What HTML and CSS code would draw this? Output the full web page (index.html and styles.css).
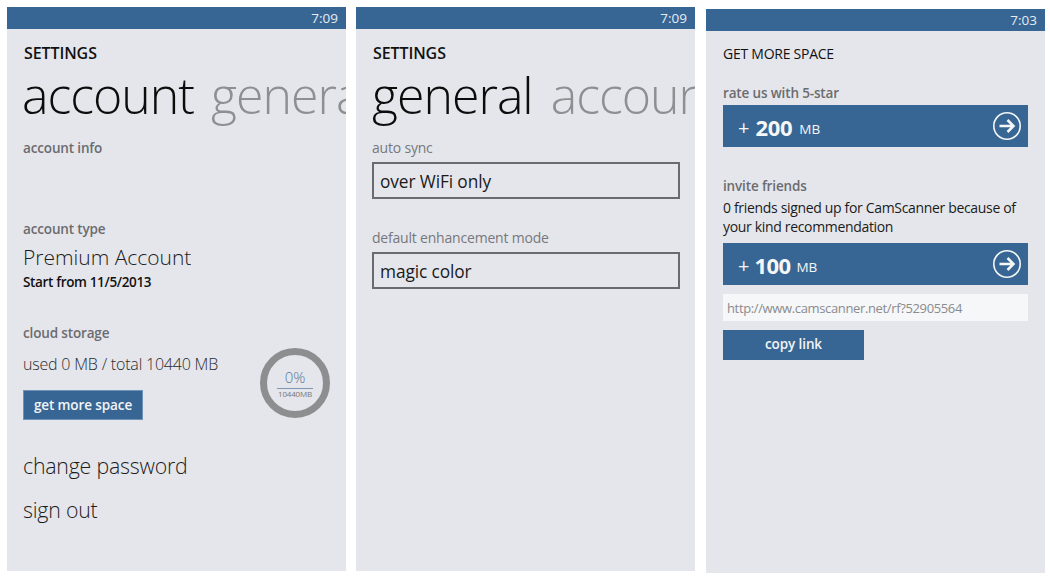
FILE: index.html
```html
<!DOCTYPE html>
<html lang="en">
<head>
<meta charset="utf-8">
<title>CamScanner settings</title>
<link rel="stylesheet" href="styles.css">
</head>
<body>
<main class="screens">
  <section class="phone">
    <div class="status">7:09</div>
    <div class="content">
      <h1 class="app-title">SETTINGS</h1>
      <div class="pivot pivot-account"><span class="pivot-on">account</span><span class="pivot-off">general</span></div>
      <h2 class="label label-info">account info</h2>
      <h2 class="label label-type">account type</h2>
      <p class="plan">Premium Account</p>
      <p class="since">Start from 11/5/2013</p>
      <h2 class="label label-cloud">cloud storage</h2>
      <div class="storage">
        <div class="storage-text">
          <p class="used">used 0 MB / total 10440 MB</p>
          <button class="btn btn-more">get more space</button>
        </div>
        <div class="ring">
          <span class="ring-pct">0%</span>
          <span class="ring-total">10440MB</span>
        </div>
      </div>
      <p class="link link-first">change password</p>
      <p class="link link-second">sign out</p>
    </div>
  </section>

  <section class="phone">
    <div class="status">7:09</div>
    <div class="content">
      <h1 class="app-title">SETTINGS</h1>
      <div class="pivot pivot-general"><span class="pivot-on">general</span><span class="pivot-off">account</span></div>
      <h2 class="label-light label-sync">auto sync</h2>
      <div class="select">over WiFi only</div>
      <h2 class="label-light label-mode">default enhancement mode</h2>
      <div class="select">magic color</div>
    </div>
  </section>

  <section class="phone phone-low">
    <div class="status">7:03</div>
    <div class="content content-space">
      <h1 class="page-title">GET MORE SPACE</h1>
      <h2 class="label label-rate">rate us with 5-star</h2>
      <div class="bonus">
        <span class="bonus-plus">+</span><span class="bonus-num">200</span><span class="bonus-unit">MB</span>
        <svg class="arrow" viewBox="0 0 30 30" aria-hidden="true"><circle cx="15" cy="15" r="13.2"/><path d="M7.5 15H21.5M15.5 9L21.5 15L15.5 21"/></svg>
      </div>
      <h2 class="label label-invite">invite friends</h2>
      <p class="note">0 friends signed up for CamScanner because of your kind recommendation</p>
      <div class="bonus bonus-invite">
        <span class="bonus-plus">+</span><span class="bonus-num">100</span><span class="bonus-unit">MB</span>
        <svg class="arrow" viewBox="0 0 30 30" aria-hidden="true"><circle cx="15" cy="15" r="13.2"/><path d="M7.5 15H21.5M15.5 9L21.5 15L15.5 21"/></svg>
      </div>
      <div class="url">http://www.camscanner.net/rf?52905564</div>
      <button class="btn btn-copy">copy link</button>
    </div>
  </section>
</main>
</body>
</html>
```

FILE: styles.css
```css
* { box-sizing: border-box; }
html, body { margin: 0; padding: 0; background: #fff; }
body { font-family: "Open Sans", "Noto Sans", sans-serif; color: #111; width: 1050px; height: 582px; overflow: hidden; }
h1, h2, p { margin: 0; font-weight: 400; }

.screens { display: flex; gap: 10px; padding: 7px 0 0 7px; align-items: flex-start; }
.phone { width: 339px; height: 564px; background: #e5e6eb; flex: none; overflow: hidden; }
.phone-low { margin-top: 2px; margin-left: 1px; }

.status { height: 22px; background: #386694; color: #e6ebf1; font-size: 13.5px; line-height: 22px; text-align: right; padding-right: 8px; }
.content { padding: 0 0 0 16px; }
.content-space { padding-left: 17px; }

.app-title { font-size: 16px; font-weight: 600; line-height: 22px; margin: 13px 0 0 1px; letter-spacing: -.1px; }
.page-title { font-size: 14px; line-height: 20px; margin-top: 13px; letter-spacing: -.25px; }

.pivot { white-space: nowrap; overflow: hidden; height: 68px; margin-top: -3px; font-size: 50px; font-weight: 300; line-height: 68px; letter-spacing: -1px; }
.pivot-account { margin-left: -1px; }
.pivot-on { color: #0c0c0c; }
.pivot-off { color: #8e8f92; margin-left: 17px; }
.pivot-general .pivot-off { margin-left: 18px; }

.label { font-size: 13.5px; font-weight: 600; line-height: 18px; color: #6b6c70; letter-spacing: -.15px; }
.label-info { margin-top: 10px; }
.label-type { margin-top: 63px; }
.label-cloud { margin-top: 33px; }
.plan { font-size: 21px; font-weight: 300; line-height: 28px; margin-top: 5px; color: #1c1c1c; }
.since { font-size: 13.5px; font-weight: 600; line-height: 18px; margin-top: 2px; letter-spacing: -.35px; }

.storage { display: flex; justify-content: space-between; margin-top: 10px; padding-right: 16px; }
.used { font-size: 16px; font-weight: 300; line-height: 24px; color: #2c2c2c; letter-spacing: -.2px; }
.btn { display: block; border: 0; padding: 0; background: #386694; color: #f2f4f7; font-family: inherit; font-size: 13.5px; font-weight: 600; letter-spacing: -.1px; }
.btn-more { width: 120px; height: 30px; margin-top: 14px; box-shadow: 0 0 0 1px #6f93b8 inset; }
.ring { width: 70px; height: 70px; border: 7px solid #8d8e90; border-radius: 50%; margin-top: -4px; display: flex; flex-direction: column; align-items: center; padding-top: 14px; }
.ring-pct { width: 36px; border-bottom: 1px solid #7e97b4; padding-bottom: 2px; font-size: 15px; font-weight: 300; line-height: 17px; text-align: center; color: #56799f; }
.ring-total { font-size: 8px; line-height: 9px; color: #77787b; letter-spacing: -.2px; }

.link { font-size: 21.3px; font-weight: 300; line-height: 30px; color: #1c1c1c; letter-spacing: -.2px; }
.link-first { margin-top: 31px; }
.link-second { margin-top: 14px; }

.label-light { font-size: 14px; font-weight: 400; line-height: 18px; color: #77787c; letter-spacing: -.2px; }
.label-sync { margin-top: 10px; }
.label-mode { margin-top: 30px; }
.select { width: 308px; height: 37px; margin-top: 5px; border: 2px solid #6a6b70; padding-left: 6px; font-size: 17.3px; line-height: 35px; color: #1a1a1a; letter-spacing: -.1px; }

.label-rate { margin-top: 20px; }
.label-invite { margin-top: 30px; }
.bonus { width: 305px; height: 42px; background: #386694; color: #f5f6f8; margin-top: 3px; display: flex; align-items: center; padding: 0 0 0 15px; font-size: 16px; }
.bonus-plus { font-size: 20px; margin-right: 6px; padding-top: 2px; }
.bonus-num { font-size: 22px; font-weight: 700; margin-right: 7px; letter-spacing: -.3px; padding-top: 2px; }
.bonus-unit { font-size: 13.5px; margin-top: 5px; }
.arrow { width: 30px; height: 30px; margin-left: auto; margin-right: 6px; fill: none; stroke: #f5f6f8; }
.arrow circle { stroke-width: 1.6; }
.arrow path { stroke-width: 2.5; }
.note { font-size: 14px; line-height: 19px; width: 300px; margin-top: 3px; color: #1b1b1b; letter-spacing: -.33px; }
.bonus-invite { margin-top: 7px; }
.bonus-invite .bonus-plus { margin-right: 5px; }
.bonus-invite .bonus-num { margin-right: 6px; letter-spacing: -.6px; }
.url { width: 305px; height: 27px; margin-top: 9px; background: #f6f7f8; color: #8a8b8e; font-size: 13px; line-height: 28px; padding-left: 4px; letter-spacing: -.36px; }
.btn-copy { width: 141px; height: 30px; margin-top: 9px; padding-bottom: 2px; }
```
